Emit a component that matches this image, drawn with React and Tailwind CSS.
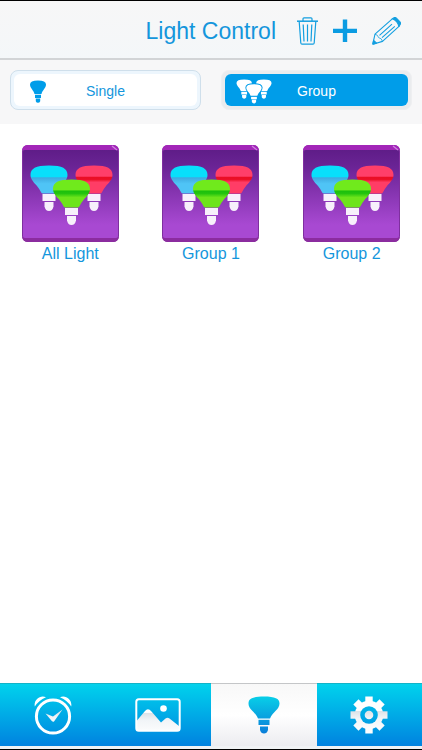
import React, { useState } from 'react';

const HEAD = 'M0 9.500C0 3 5 0 18.500 0S37 3 37 9.500C37 14 33 17.500 30.500 20.500Q28 23.500 26.300 27Q25.800 28 24.500 28H12.500Q11.200 28 10.700 27Q9 23.500 6.500 20.500C4 17.500 0 14 0 9.500Z';

// shared gradients, referenced by id from the icons below
function Gradients() {
  return (
    <svg className="absolute size-0" aria-hidden="true">
      <defs>
        <linearGradient id="tile" x1="0" y1="0" x2="0" y2="1">
          <stop offset="0" stopColor="#5f1d88" />
          <stop offset="0.2" stopColor="#6b2496" />
          <stop offset="0.85" stopColor="#a849d2" />
          <stop offset="1" stopColor="#a849d2" />
        </linearGradient>
        <linearGradient id="cyan" x1="0" y1="0" x2="0" y2="1">
          <stop offset="0.4" stopColor="#08dffb" />
          <stop offset="0.44" stopColor="#3fa9e0" />
          <stop offset="0.65" stopColor="#4fc4f6" />
        </linearGradient>
        <linearGradient id="red" x1="0" y1="0" x2="0" y2="1">
          <stop offset="0.38" stopColor="#ff3f69" />
          <stop offset="0.43" stopColor="#e90d22" />
          <stop offset="0.5" stopColor="#ec1028" />
          <stop offset="0.6" stopColor="#ff3d66" />
        </linearGradient>
        <linearGradient id="green" x1="0" y1="0" x2="0" y2="1">
          <stop offset="0.36" stopColor="#70ea1c" />
          <stop offset="0.42" stopColor="#1cc00d" />
          <stop offset="0.5" stopColor="#24c40e" />
          <stop offset="0.64" stopColor="#6de41b" />
        </linearGradient>
        <linearGradient id="blue" gradientUnits="userSpaceOnUse" x1="0" y1="0" x2="0" y2="44">
          <stop offset="0" stopColor="#08d0e8" />
          <stop offset="1" stopColor="#0a6fd6" />
        </linearGradient>
        <linearGradient id="gloss" gradientUnits="userSpaceOnUse" x1="0" y1="0" x2="0" y2="38">
          <stop offset="0.38" stopColor="#ffffff" />
          <stop offset="0.4" stopColor="#dde2e7" />
          <stop offset="0.6" stopColor="#f2f5f8" />
          <stop offset="1" stopColor="#ffffff" />
        </linearGradient>
      </defs>
    </svg>
  );
}

function TileBulb({ x, y, fill }) {
  return (
    <g transform={`translate(${x} ${y})`}>
      <rect x="12" y="28.500" width="13" height="7" fill="#f7f0fb" />
      <path d="M14 36.500h9v4.500q-1 4.500-4.500 4.500t-4.500-4.500z" fill="#f7f0fb" />
      <path d={HEAD} fill={fill} />
    </g>
  );
}

function GroupTile() {
  return (
    <svg viewBox="0 0 97 97" className="size-[97px]" aria-hidden="true">
      <rect width="97" height="97" rx="6" fill="#7f2f9f" />
      <path d="M6 0H91Q96 0 97 5L94 5H3L0 5Q1 0 6 0Z" fill="#a226b8" />
      <path d="M0 92L3 93H94L97 92Q96 97 91 97H6Q1 97 0 92Z" fill="#8b2c9f" />
      <rect x="1" y="5" width="95" height="88" rx="2" fill="url(#tile)" />
      <path d="M90 1l5 4" stroke="#cf86e0" strokeWidth="1.200" />
      <TileBulb x={8.5} y={20.5} fill="url(#cyan)" />
      <TileBulb x={53.5} y={20.5} fill="url(#red)" />
      <TileBulb x={31} y={34.5} fill="url(#green)" />
    </svg>
  );
}

function SmallBulb({ x, y, outline }) {
  return (
    <g transform={`translate(${x} ${y})`} stroke={outline} strokeWidth={outline ? 2 : 0} paintOrder="stroke">
      <path d="M5 14.200h6v3.200H5zM5.800 18.100h4.400v2.600q-.6 1.600-2.200 1.600t-2.200-1.600z" />
      <path d="M0 4Q0 0 8 0T16 4C16 7.500 12.500 9.500 11.500 13.500H4.500C3.500 9.500 0 7.500 0 4Z" />
    </g>
  );
}

function SingleIcon() {
  return (
    <svg viewBox="0 0 17 23" className="h-[23px] w-[18px]" fill="currentColor" aria-hidden="true">
      <SmallBulb x={0.5} y={0.5} />
    </svg>
  );
}

function GroupIcon() {
  return (
    <svg viewBox="0 0 36 25" className="h-[25px] w-[36px]" fill="currentColor" aria-hidden="true">
      <g transform="translate(0.500 0.500) scale(0.960 0.860)">
        <SmallBulb x={0} y={0} />
        <SmallBulb x={20.5} y={0} />
        <SmallBulb x={10.200} y={5.5} outline="#009de9" />
      </g>
    </svg>
  );
}

function TrashIcon() {
  return (
    <svg viewBox="0 0 21 28" className="h-[28px] w-[21px]" fill="none" stroke="currentColor" strokeWidth="1.200" aria-hidden="true">
      <path d="M0 4.200H21" strokeWidth="1.500" />
      <path d="M6 4V1.700Q6 .8 7 .8h7q1 0 1 .9V4" />
      <path d="M2.200 4.500L3.800 26Q4 27.200 5 27.200H16Q17 27.200 17.200 26L18.800 4.500" />
      <path d="M6.200 7.500L7 24.500M10.500 7.500V24.500M14.800 7.500L14 24.500" />
    </svg>
  );
}

function PlusIcon() {
  return (
    <svg viewBox="0 0 24 24" className="size-[24px]" fill="currentColor" aria-hidden="true">
      <path d="M9.800 .5h4.400v9.300H24v4.200H14.200v9H9.800v-9H0V9.800H9.800z" />
    </svg>
  );
}

function PencilIcon() {
  return (
    <svg viewBox="0 0 29 28" className="h-[28px] w-[29px]" fill="none" stroke="currentColor" strokeWidth="1.100" strokeLinejoin="round" aria-hidden="true">
      <path d="M.8 27.200L3 17.200L20.300 1.800M.8 27.200L10.500 24.400L27.500 8.800" />
      <path d="M7.500 18.300L20 7.200M10 20.700L22.800 9.300" />
      <path d="M3 17.200Q5.800 17.600 6.600 20.600Q9.800 21.200 10.500 24.400" strokeWidth=".8" />
      <path d="M20.300 1.800L22.500 .6Q23.500 .3 24.400 1.200L28.200 5.200Q28.900 6.300 28.200 7.400L26.800 9.400Q26 4.200 20.300 1.800Z" fill="currentColor" />
      <path d="M.8 27.200l.8-3.800 3 2.800z" fill="currentColor" />
    </svg>
  );
}

function ClockIcon() {
  return (
    <svg viewBox="0 0 38 40" className="h-[40px] w-[38px]" fill="none" aria-hidden="true">
      <circle cx="19" cy="21.500" r="16.600" stroke="#fff" strokeWidth="3" />
      <path d="M.8 11.500C-.5 5 6 -.5 12 2.200Q4.500 5.500 .8 11.500Z" fill="#fff" />
      <path d="M37.200 11.500C38.500 5 32 -.5 26 2.200Q33.500 5.500 37.200 11.500Z" fill="#fff" />
      <path d="M11.500 18.500L19 21.500L28.500 14.500L20 26.500Q19 27 18 26.300Z" fill="url(#gloss)" />
    </svg>
  );
}

function SceneIcon() {
  return (
    <svg viewBox="0 0 46 34" className="h-[34px] w-[46px]" fill="none" aria-hidden="true">
      <path d="M2 22.500L10 13Q13 9.500 16.500 13.500L26 24.500L30.500 20.500Q32.500 19 34.500 20.500L44 28V32H2Z" fill="url(#gloss)" />
      <circle cx="28.500" cy="10.500" r="3.300" fill="#fff" />
      <rect x="1.300" y="1.300" width="43.400" height="31.400" rx="2.500" stroke="#fff" strokeWidth="2" />
    </svg>
  );
}

function LightIcon() {
  return (
    <svg viewBox="0 0 32 38" className="h-[38px] w-[32px]" fill="url(#blue)" aria-hidden="true">
      <path d="M.5 7.500C.5 2.500 5 .5 16 .5S31.500 2.500 31.500 7.500C31.500 13.500 24.500 16 22 22.500H10C7.500 16 .5 13.500 .5 7.500Z" />
      <rect x="10.500" y="23.800" width="11" height="5.200" />
      <path d="M12 30.500h8v3.500q-1 3.500-4 3.500t-4-3.500z" />
    </svg>
  );
}

function GearIcon() {
  const teeth = [0, 45, 90, 135, 180, 225, 270, 315];
  return (
    <svg viewBox="0 0 38 38" className="size-[38px]" aria-hidden="true">
      <defs>
        <mask id="gear">
          <g fill="#fff">
            <circle cx="19" cy="19" r="14.200" />
            {teeth.map((a) => (
              <rect key={a} x="15.300" y=".5" width="7.400" height="8" transform={`rotate(${a} 19 19)`} />
            ))}
          </g>
          <circle cx="19" cy="19" r="8.800" fill="#000" />
          <circle cx="19" cy="19" r="4.300" fill="#fff" />
        </mask>
      </defs>
      <rect width="38" height="38" fill="url(#gloss)" mask="url(#gear)" />
    </svg>
  );
}

const groups = ['All Light', 'Group 1', 'Group 2'];

const tabs = [
  { name: 'Alarm', Icon: ClockIcon },
  { name: 'Scenes', Icon: SceneIcon },
  { name: 'Lights', Icon: LightIcon },
  { name: 'Settings', Icon: GearIcon },
];

function ModeButton({ label, active, onClick, children }) {
  return (
    <button
      type="button"
      aria-pressed={active}
      onClick={onClick}
      className={`h-10 flex-1 rounded-lg border p-[3px] ${
        active ? 'border-[#eeeff1] bg-[#eaecee] text-white' : 'border-[#cfdfeb] bg-[#edf6fd] text-[#1496dc]'
      }`}
    >
      <span
        className={`grid h-full grid-cols-[48px_1fr_48px] items-center rounded-md pt-0.5 text-sm ${
          active ? 'bg-[#009de9]' : 'bg-white'
        }`}
      >
        <span className={`flex justify-center ${active ? 'pl-2.5' : 'text-[#009de9]'}`}>{children}</span>
        <span>{label}</span>
      </span>
    </button>
  );
}

export default function App() {
  const [mode, setMode] = useState('group');
  const [tab, setTab] = useState('Lights');

  return (
    <div className="flex min-h-screen flex-col border-y border-black bg-white font-['Liberation_Sans',Arial,sans-serif] text-[#1496dc]">
      <Gradients />

      <header className="flex h-[59px] items-center justify-end gap-[15px] border-b-2 border-[#d2d4d6] bg-linear-to-b from-[#f7f7f7] to-[#f4f7f9] pt-0.5 pr-[21px]">
        <h1 className="mr-1.5 text-[23px] leading-7">Light Control</h1>
        <button type="button" aria-label="Delete" className="text-[#139fe0]"><TrashIcon /></button>
        <button type="button" aria-label="Add" className="text-[#0b9ce2]"><PlusIcon /></button>
        <button type="button" aria-label="Edit" className="text-[#139fe0]"><PencilIcon /></button>
      </header>

      <div className="flex gap-5 bg-[#f7f7f8] px-2.5 pt-2.5 pb-3.5">
        <ModeButton label="Single" active={mode === 'single'} onClick={() => setMode('single')}>
          <SingleIcon />
        </ModeButton>
        <ModeButton label="Group" active={mode === 'group'} onClick={() => setMode('group')}>
          <GroupIcon />
        </ModeButton>
      </div>

      <main className="grid flex-1 grid-cols-3 content-start pt-[21px]">
        {groups.map((name) => (
          <button key={name} type="button" className="flex flex-col items-center gap-0.5 text-base leading-5">
            <GroupTile />
            <span>{name}</span>
          </button>
        ))}
      </main>

      <nav className="grid grid-cols-4 border-b-[3px] border-[#f0f2f4]">
        {tabs.map(({ name, Icon }) => (
          <button
            key={name}
            type="button"
            aria-label={name}
            onClick={() => setTab(name)}
            className={`flex h-[63px] items-center justify-center border-t ${
              tab === name
                ? 'border-[#c4c6c8] bg-linear-to-b from-[#f8f8f8] via-white to-[#ececf0]'
                : 'border-[#12b3c8] bg-linear-to-b from-[#05d2ec] to-[#0482df]'
            }`}
          >
            <Icon />
          </button>
        ))}
      </nav>
    </div>
  );
}
